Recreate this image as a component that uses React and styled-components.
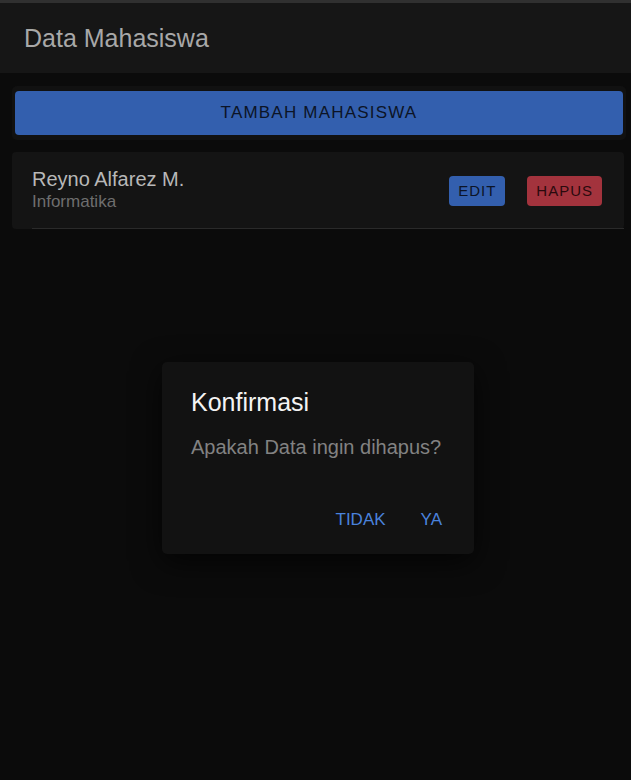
import React from 'react';
import styled, { createGlobalStyle } from 'styled-components';

const GlobalStyle = createGlobalStyle`
  html, body {
    margin: 0;
    padding: 0;
    background: #0b0b0b;
    font-family: "Liberation Sans", Arial, sans-serif;
  }
`;

const Page = styled.div`
  position: relative;
  width: 631px;
  height: 780px;
  background: #0b0b0b;
  border-top: 3px solid #303030;
  box-sizing: border-box;
  overflow: hidden;
`;

const Header = styled.header`
  height: 70px;
  background: #161616;
  display: flex;
  align-items: center;
  padding: 0 24px;
`;

const Title = styled.h1`
  margin: 0;
  font-size: 25px;
  font-weight: 400;
  color: #a8a8a8;
`;

const Content = styled.main`
  padding: 13px 5px 0 12px;
  display: flex;
  flex-direction: column;
  gap: 12px;
`;

const ButtonCard = styled.div`
  background: #111111;
  border-radius: 5px;
  padding: 5px 3px;
`;

const PrimaryButton = styled.button`
  width: 100%;
  height: 44px;
  border: none;
  border-radius: 4px;
  background: #335fae;
  color: #0c1426;
  font-family: inherit;
  font-size: 17px;
  letter-spacing: 1.2px;
  text-transform: uppercase;
`;

const ItemCard = styled.div`
  background: #141414;
  border-radius: 4px;
  height: 77px;
  margin-right: 2px;
  position: relative;
  display: flex;
  align-items: center;
  padding: 0 22px 0 20px;
  &::after {
    content: '';
    position: absolute;
    left: 20px;
    right: 0;
    bottom: 0;
    height: 1px;
    background: #2a2a2a;
  }
`;

const ItemText = styled.div`
  flex: 1;
  display: flex;
  flex-direction: column;
  gap: 1px;
  margin-top: -2px;
`;

const Name = styled.div`
  font-size: 20px;
  color: #b8b8b8;
`;

const Major = styled.div`
  font-size: 17px;
  color: #6e6e6e;
`;

const Actions = styled.div`
  display: flex;
  gap: 22px;
`;

const SmallButton = styled.button`
  height: 30px;
  padding: 0 9px;
  border: none;
  border-radius: 4px;
  background: ${(p) => (p.$danger ? '#a3333d' : '#335fae')};
  color: ${(p) => (p.$danger ? '#2a0a0d' : '#0c1426')};
  font-family: inherit;
  font-size: 15px;
  letter-spacing: 1px;
`;

const Dialog = styled.div`
  position: absolute;
  left: 162px;
  top: 359px;
  width: 312px;
  height: 192px;
  box-sizing: border-box;
  background: #121212;
  border-radius: 5px;
  box-shadow: 0 8px 30px rgba(0, 0, 0, 0.7);
  padding: 26px 32px 0 29px;
  display: flex;
  flex-direction: column;
`;

const DialogTitle = styled.h2`
  margin: 0;
  font-size: 25px;
  font-weight: 400;
  color: #f4f4f4;
`;

const DialogText = styled.p`
  margin: 19px 0 0;
  font-size: 20px;
  color: #828282;
`;

const DialogActions = styled.div`
  margin-top: 51px;
  display: flex;
  justify-content: flex-end;
  gap: 35px;
`;

const TextButton = styled.button`
  border: none;
  background: none;
  padding: 0;
  font-family: inherit;
  font-size: 17px;
  color: #4a82dc;
`;

export default function App() {
  return (
    <>
      <GlobalStyle />
      <Page>
        <Header>
          <Title>Data Mahasiswa</Title>
        </Header>
        <Content>
          <ButtonCard>
            <PrimaryButton>Tambah Mahasiswa</PrimaryButton>
          </ButtonCard>
          <ItemCard>
            <ItemText>
              <Name>Reyno Alfarez M.</Name>
              <Major>Informatika</Major>
            </ItemText>
            <Actions>
              <SmallButton>EDIT</SmallButton>
              <SmallButton $danger>HAPUS</SmallButton>
            </Actions>
          </ItemCard>
        </Content>
        <Dialog>
          <DialogTitle>Konfirmasi</DialogTitle>
          <DialogText>Apakah Data ingin dihapus?</DialogText>
          <DialogActions>
            <TextButton>TIDAK</TextButton>
            <TextButton>YA</TextButton>
          </DialogActions>
        </Dialog>
      </Page>
    </>
  );
}
